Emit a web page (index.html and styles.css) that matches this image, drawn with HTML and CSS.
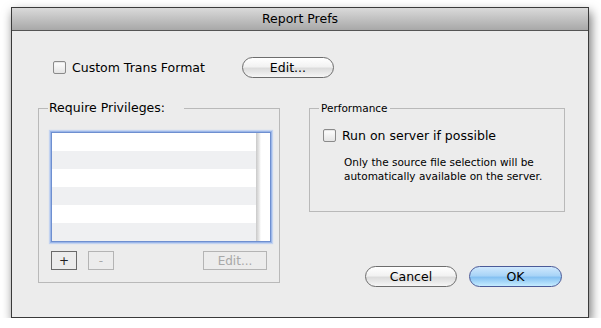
FILE: index.html
```html
<!DOCTYPE html>
<html lang="en">
<head>
    <meta charset="UTF-8">
    <title>Report Prefs</title>
    <link rel="stylesheet" href="styles.css">
</head>
<body>
    <div class="window">
        <div class="titlebar">Report Prefs</div>
        <div class="content">
            <div class="top-row">
                <label class="check">
                    <span class="box"></span>
                    <span>Custom Trans Format</span>
                </label>
                <button class="aqua edit-btn">Edit...</button>
            </div>

            <div class="main">
                <fieldset class="group privileges">
                    <legend>Require Privileges:</legend>
                    <div class="list">
                        <div class="rows">
                            <div class="row"></div>
                            <div class="row"></div>
                            <div class="row"></div>
                            <div class="row"></div>
                            <div class="row"></div>
                            <div class="row"></div>
                        </div>
                        <div class="scroll"></div>
                    </div>
                    <div class="list-buttons">
                        <button class="square">+</button>
                        <button class="square disabled">-</button>
                        <button class="square disabled wide">Edit...</button>
                    </div>
                </fieldset>

                <div class="right">
                    <fieldset class="group performance">
                        <legend>Performance</legend>
                        <label class="check">
                            <span class="box"></span>
                            <span>Run on server if possible</span>
                        </label>
                        <p class="note">Only the source file selection will be<br>automatically available on the server.</p>
                    </fieldset>
                    <div class="actions">
                        <button class="aqua">Cancel</button>
                        <button class="aqua default">OK</button>
                    </div>
                </div>
            </div>
        </div>
    </div>
</body>
</html>
```

FILE: styles.css
```css
body {
    margin: 0;
    background: #ffffff;
    font-family: "DejaVu Sans", sans-serif;
    font-size: 12px;
    color: #000;
}

.window {
    width: 576px;
    height: 309px;
    margin: 7px 0 0 11px;
    border: 1px solid #3a3a3a;
    background: #ececec;
    box-shadow: 2px 5px 10px rgba(0, 0, 0, 0.55);
}

.titlebar {
    height: 22px;
    line-height: 22px;
    text-align: center;
    font-size: 12.5px;
    background: linear-gradient(#dadada, #a8a8a8);
    border-bottom: 1px solid #555;
}

.content {
    padding: 26px 0 0 26px;
}

.top-row {
    display: flex;
    align-items: center;
    height: 21px;
    padding-left: 15px;
}

.check {
    display: flex;
    align-items: center;
    gap: 6px;
    font-size: 12.5px;
}

.box {
    width: 11px;
    height: 11px;
    border: 1px solid #8a8a8a;
    border-radius: 2px;
    background: linear-gradient(#ffffff, #e4e4e4);
    box-shadow: inset 0 1px 1px rgba(0, 0, 0, 0.1);
}

.aqua {
    height: 21px;
    border: 1px solid #6d6d6d;
    border-radius: 11px;
    background: linear-gradient(#ffffff 0%, #f2f2f2 45%, #dcdcdc 55%, #f6f6f6 100%);
    font-family: inherit;
    font-size: 12.5px;
    color: #000;
    padding: 0;
}

.edit-btn {
    width: 92px;
    margin-left: 37px;
}

.main {
    display: flex;
    margin-top: 22px;
}

.group {
    margin: 0;
    border: 1px solid #b9b9b9;
    padding: 0;
}

.group legend {
    line-height: 16px;
}

.privileges {
    width: 242px;
    height: 183px;
    box-sizing: border-box;
    padding: 16px 8px 0 12px;
}

.privileges legend {
    margin-left: -3px;
    padding: 0 19px 0 1px;
    font-size: 12.5px;
}

.list {
    display: flex;
    height: 108px;
    border: 1px solid #6e8fd0;
    box-shadow: 0 0 0 1px #9bb6e8, 0 0 1px 2px #c3d3f0;
}

.rows {
    flex: 1;
}

.row {
    height: 18px;
    background: #ffffff;
}

.row:nth-child(even) {
    background: #eff0f2;
}

.scroll {
    width: 14px;
    background: linear-gradient(90deg, #c9c9c9, #e6e6e6 3px, #ffffff 5px);
}

.list-buttons {
    display: flex;
    margin-top: 9px;
    gap: 11px;
}

.square {
    width: 26px;
    height: 19px;
    border: 1px solid #6a6a6a;
    background: #ececec;
    font-family: inherit;
    font-size: 12px;
    padding: 0;
    color: #222;
}

.square.disabled {
    border-color: #b4b4b4;
    color: #a8a8a8;
}

.square.wide {
    width: 64px;
    margin: 0 4px 0 auto;
}

.right {
    margin-left: 29px;
    width: 256px;
}

.performance {
    box-sizing: border-box;
    height: 112px;
    padding: 12px 0 0 13px;
}

.performance legend {
    margin-left: -4px;
    padding: 0 2px;
    font-size: 10.5px;
}

.note {
    margin: 12px 0 0 21px;
    font-size: 10.5px;
    line-height: 14px;
}

.actions {
    display: flex;
    gap: 12px;
    margin: 54px 0 0 56px;
}

.actions .aqua {
    width: 92px;
}

.actions .aqua.default {
    width: 93px;
    border-color: #4b5a98;
    background: linear-gradient(#cfe8fd 0%, #a9d4f7 45%, #85c1f2 55%, #c6ecff 100%);
}
```
